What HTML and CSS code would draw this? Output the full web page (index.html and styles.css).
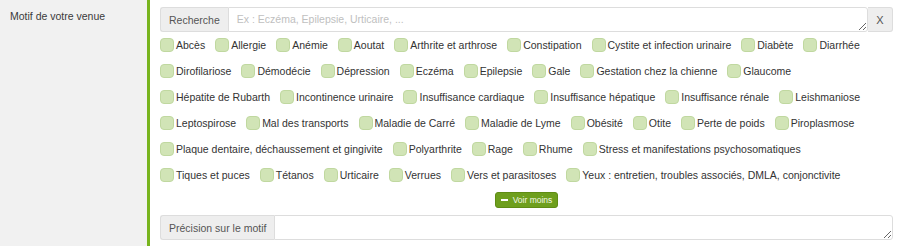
FILE: index.html
```html
<html>
<head>
<title>Motif de votre venue</title>
<link rel="stylesheet" href="styles.css">
</head>
<body>
 <div class="formRow">
    <div class="rowLabel">Motif de votre venue</div>
    <div class="rowField">
        <div class="inputGroup">
            <span class="addon">Recherche</span>
            <textarea class="field" rows="1" placeholder="Ex : Eczéma, Epilepsie, Urticaire, ..."></textarea>
            <button type="button" class="clearBtn">X</button>
        </div>
        <div class="motifs">
            <label class="motif"><input type="checkbox">Abcès</label>
            <label class="motif"><input type="checkbox">Allergie</label>
            <label class="motif"><input type="checkbox">Anémie</label>
            <label class="motif"><input type="checkbox">Aoutat</label>
            <label class="motif"><input type="checkbox">Arthrite et arthrose</label>
            <label class="motif"><input type="checkbox">Constipation</label>
            <label class="motif"><input type="checkbox">Cystite et infection urinaire</label>
            <label class="motif"><input type="checkbox">Diabète</label>
            <label class="motif"><input type="checkbox">Diarrhée</label>
            <label class="motif"><input type="checkbox">Dirofilariose</label>
            <label class="motif"><input type="checkbox">Démodécie</label>
            <label class="motif"><input type="checkbox">Dépression</label>
            <label class="motif"><input type="checkbox">Eczéma</label>
            <label class="motif"><input type="checkbox">Epilepsie</label>
            <label class="motif"><input type="checkbox">Gale</label>
            <label class="motif"><input type="checkbox">Gestation chez la chienne</label>
            <label class="motif"><input type="checkbox">Glaucome</label>
            <label class="motif"><input type="checkbox">Hépatite de Rubarth</label>
            <label class="motif"><input type="checkbox">Incontinence urinaire</label>
            <label class="motif"><input type="checkbox">Insuffisance cardiaque</label>
            <label class="motif"><input type="checkbox">Insuffisance hépatique</label>
            <label class="motif"><input type="checkbox">Insuffisance rénale</label>
            <label class="motif"><input type="checkbox">Leishmaniose</label>
            <label class="motif"><input type="checkbox">Leptospirose</label>
            <label class="motif"><input type="checkbox">Mal des transports</label>
            <label class="motif"><input type="checkbox">Maladie de Carré</label>
            <label class="motif"><input type="checkbox">Maladie de Lyme</label>
            <label class="motif"><input type="checkbox">Obésité</label>
            <label class="motif"><input type="checkbox">Otite</label>
            <label class="motif"><input type="checkbox">Perte de poids</label>
            <label class="motif"><input type="checkbox">Piroplasmose</label>
            <label class="motif"><input type="checkbox">Plaque dentaire, déchaussement et gingivite</label>
            <label class="motif"><input type="checkbox">Polyarthrite</label>
            <label class="motif"><input type="checkbox">Rage</label>
            <label class="motif"><input type="checkbox">Rhume</label>
            <label class="motif"><input type="checkbox">Stress et manifestations psychosomatiques</label>
            <label class="motif"><input type="checkbox">Tiques et puces</label>
            <label class="motif"><input type="checkbox">Tétanos</label>
            <label class="motif"><input type="checkbox">Urticaire</label>
            <label class="motif"><input type="checkbox">Verrues</label>
            <label class="motif"><input type="checkbox">Vers et parasitoses</label>
            <label class="motif"><input type="checkbox">Yeux : entretien, troubles associés, DMLA, conjonctivite</label>
        </div>
        <div class="moreRow">
            <button type="button" class="lessBtn"><span class="minus"></span>Voir moins</button>
        </div>
        <div class="inputGroup">
            <span class="addon">Précision sur le motif</span>
            <textarea class="field" rows="1"></textarea>
        </div>
    </div>
 </div>
</body>
</html>
```

FILE: styles.css
```css
body {margin: 0;
      font-family: "Liberation Sans", Arial, sans-serif;
      font-size: 10.5px;
      color: #333;
      background: #fff;}
.formRow {display: flex;
          height: 246px;}
.rowLabel {width: 137px;
           padding: 10px 0 0 10px;
           background: #f1f1f1;
           border-right: 3px solid #78b41e;
           color: #3a3a3a;}
.rowField {flex: 1;
           padding: 7px 7px 0 10px;}
.inputGroup {display: flex;
             height: 25px;
             box-sizing: border-box;}
.addon {display: flex;
        align-items: center;
        padding: 0 8px;
        background: #eee;
        border: 1px solid #ddd;
        border-right: none;
        border-radius: 3px 0 0 3px;
        color: #555;}
.field {flex: 1;
        height: 25px;
        min-height: 25px;
        box-sizing: border-box;
        border: 1px solid #ddd;
        padding: 5px 8px;
        font-family: "Liberation Sans", Arial, sans-serif;
        font-size: 10.5px;
        color: #555;
        resize: vertical;
        border-radius: 0 3px 3px 0;}
.field::placeholder {color: #c0c0c0;}
.clearBtn {width: 25px;
           background: #eee;
           border: 1px solid #ddd;
           border-left: none;
           border-radius: 0 3px 3px 0;
           color: #555;
           font-family: "Liberation Sans", Arial, sans-serif;
           font-size: 11px;
           padding: 0;}
.motifs {display: flex;
         flex-wrap: wrap;}
.motif {display: flex;
        align-items: center;
        height: 26px;
        margin-right: 10px;}
.motif input {appearance: none;
              width: 14px;
              height: 14px;
              margin: 0 2px 0 0;
              background: #d1e4b6;
              border: 1px solid #c0d8a0;
              border-radius: 4px;}
.moreRow {display: flex;
          justify-content: center;
          padding: 4px 0 7px;}
.lessBtn {display: flex;
          align-items: center;
          height: 16px;
          padding: 0 5px;
          background: #6e9f1d;
          border: 1px solid #5f8c14;
          border-radius: 3px;
          color: #f3f8e8;
          font-family: "Liberation Sans", Arial, sans-serif;
          font-size: 8.5px;}
.minus {width: 7px;
        height: 2px;
        background: #fff;
        margin-right: 5px;}
```
